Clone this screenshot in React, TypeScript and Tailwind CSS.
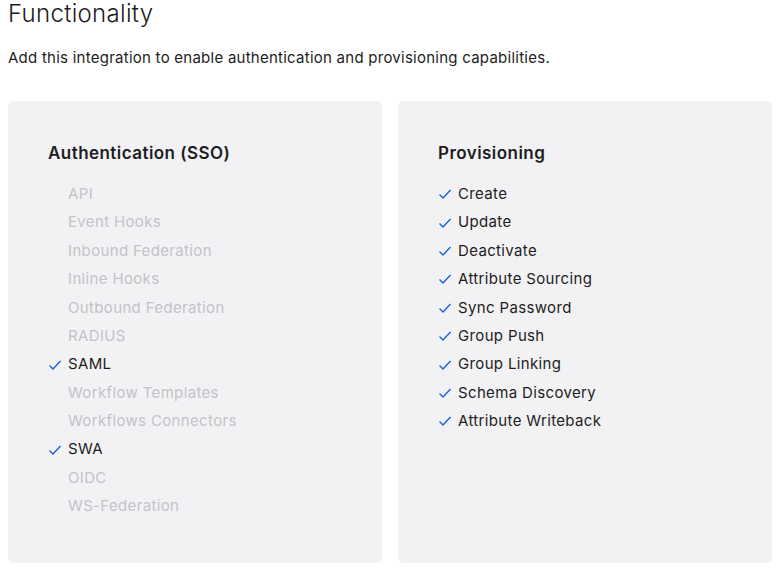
import React from "react";

type Item = { label: string; enabled: boolean };

const auth: Item[] = [
  { label: "API", enabled: false },
  { label: "Event Hooks", enabled: false },
  { label: "Inbound Federation", enabled: false },
  { label: "Inline Hooks", enabled: false },
  { label: "Outbound Federation", enabled: false },
  { label: "RADIUS", enabled: false },
  { label: "SAML", enabled: true },
  { label: "Workflow Templates", enabled: false },
  { label: "Workflows Connectors", enabled: false },
  { label: "SWA", enabled: true },
  { label: "OIDC", enabled: false },
  { label: "WS-Federation", enabled: false },
];

const provisioning: Item[] = [
  "Create",
  "Update",
  "Deactivate",
  "Attribute Sourcing",
  "Sync Password",
  "Group Push",
  "Group Linking",
  "Schema Discovery",
  "Attribute Writeback",
].map((label) => ({ label, enabled: true }));

function Check() {
  return (
    <svg width="14" height="14" viewBox="0 0 14 14" fill="none" className="shrink-0">
      <path d="M1.5 7.5 L5 11 L12.5 3" stroke="#1662dd" strokeWidth="1.4" />
    </svg>
  );
}

function Panel({ title, items }: { title: string; items: Item[] }) {
  return (
    <div className="flex-1 bg-[#f2f2f4] rounded-[5px] pt-[40px] px-10 h-[462px]">
      <h3 className="text-[17px] font-semibold text-[#1d1d21] leading-6 tracking-[0.45px]">
        {title}
      </h3>
      <ul className="mt-[15px]">
        {items.map((item) => (
          <li key={item.label} className="flex items-center h-[28.4px]">
            <span className="w-5 flex">{item.enabled && <Check />}</span>
            <span
              className={`text-[15px] tracking-[0.35px] ${
                item.enabled ? "text-[#1d1d21]" : "text-[#c3c3c8]"
              }`}
            >
              {item.label}
            </span>
          </li>
        ))}
      </ul>
    </div>
  );
}

export default function App() {
  return (
    <div className="bg-white px-2 font-['Inter',sans-serif] w-[780px] h-[573px]">
      <h1 className="text-[24px] font-light text-[#1d1d21] leading-7 tracking-[0.3px]">
        Functionality
      </h1>
      <p className="mt-[18px] text-[15px] text-[#1d1d21] leading-6 tracking-[0.25px]">
        Add this integration to enable authentication and provisioning capabilities.
      </p>
      <div className="flex gap-4 mt-[31px]">
        <Panel title="Authentication (SSO)" items={auth} />
        <Panel title="Provisioning" items={provisioning} />
      </div>
    </div>
  );
}
